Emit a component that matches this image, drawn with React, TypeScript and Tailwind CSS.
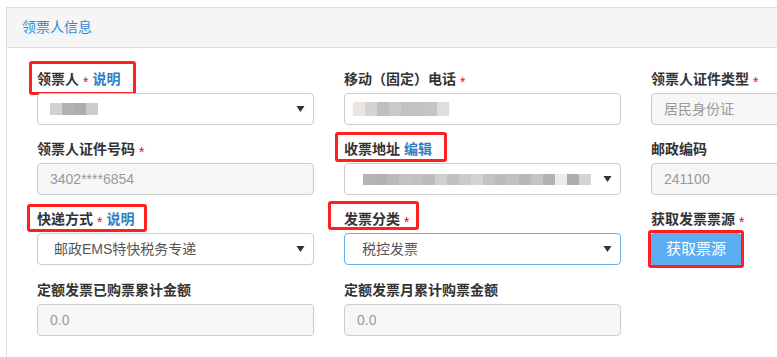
import React from "react";

const FONT = { fontFamily: '"Liberation Sans", "Noto Sans CJK SC", Arial, sans-serif' };

function Star() {
  return <span className="relative top-[3px] ml-[4px] text-[14px] font-normal text-[#ff0000]">*</span>;
}

function Mark({ cls }: { cls: string }) {
  return <span className={"pointer-events-none absolute rounded-[3px] border-[3px] border-[#ff1f1f] " + cls} />;
}

function Arrow() {
  return (
    <svg width="9" height="7" viewBox="0 0 9 7" className="absolute right-[8px] top-1/2 -translate-y-1/2">
      <path d="M0.5 0.5 H8.5 L4.5 6.5 Z" fill="#333" />
    </svg>
  );
}

function Blocks({ colors, h = 12 }: { colors: string[]; h?: number }) {
  return (
    <div className="flex blur-[0.6px]">
      {colors.map((c, i) => (
        <div key={i} className="w-[12px]" style={{ background: c, height: h }} />
      ))}
    </div>
  );
}

function Label({ children, mark }: { children: React.ReactNode; mark?: string }) {
  return (
    <div className="mb-[4px] h-5 leading-5">
      <span className="relative inline-block whitespace-nowrap text-[14px] font-bold text-[#333]">
        {children}
        {mark && <Mark cls={mark} />}
      </span>
    </div>
  );
}

function Box({
  children,
  disabled,
  select,
  focus,
  pl = "pl-[12px]",
}: {
  children?: React.ReactNode;
  disabled?: boolean;
  select?: boolean;
  focus?: boolean;
  pl?: string;
}) {
  return (
    <div
      className={
        "relative flex h-[32px] items-center rounded-[4px] border text-[14px] " +
        pl +
        " " +
        (focus ? "border-[#66afe9] " : "border-[#cccccc] ") +
        (disabled ? "bg-[#f6f6f6] text-[#999]" : "bg-white text-[#555]")
      }
    >
      {children}
      {select && <Arrow />}
    </div>
  );
}

export default function App() {
  return (
    <div className="h-[357px] w-[777px] overflow-hidden bg-white pl-[6px] pt-[7px]" style={FONT}>
      <div className="h-[400px] w-[820px] border border-[#dddddd] bg-white">
        <div className="flex h-[40px] items-center border-b border-[#dddddd] bg-[#f5f5f5] pl-[15px] text-[14px] text-[#2d8bd3]">
          领票人信息
        </div>
        <div className="grid grid-cols-[307px_307px_206px] pl-[15px] pt-[21px]">
          {/* Row 1 */}
          <div className="mb-[14px] px-[15px]">
            <Label mark="-left-[8px] -top-[8px] w-[107px] h-[34px]">
              领票人
              <Star />
              <span className="ml-[4px] text-[#2f7ec4]">说明</span>
            </Label>
            <Box select>
              <Blocks colors={["#d2d2d0", "#b2b2b2", "#adadad", "#c9cbce"]} />
            </Box>
          </div>
          <div className="mb-[14px] px-[15px]">
            <Label>
              移动（固定）电话
              <Star />
            </Label>
            <Box pl="pl-[6px]">
              <div className="rounded-[6px] bg-[#fafafa] px-[2px]">
                <Blocks colors={["#ece6e3", "#d3d4d6", "#bfbfbf", "#cacaca", "#c1c1c1", "#c2c2c2", "#c5c5c5", "#dedede"]} h={14} />
              </div>
            </Box>
          </div>
          <div className="mb-[14px] pl-[15px]">
            <Label>
              领票人证件类型
              <Star />
            </Label>
            <Box disabled>居民身份证</Box>
          </div>

          {/* Row 2 */}
          <div className="mb-[14px] px-[15px]">
            <Label>
              领票人证件号码
              <Star />
            </Label>
            <Box disabled>3402****6854</Box>
          </div>
          <div className="mb-[14px] px-[15px]">
            <Label mark="-left-[9px] -top-[7px] w-[112px] h-[30px]">
              收票地址
              <span className="ml-[4px] text-[#2f7ec4]">编辑</span>
            </Label>
            <Box select pl="pl-[18px]">
              <Blocks
                h={11}
                colors={[
                  "#b4b4b6",
                  "#b2b2b3",
                  "#bababa",
                  "#c3c3c3",
                  "#c1c1c1",
                  "#bcbcbe",
                  "#cfd0cd",
                  "#c1c1c1",
                  "#cbcbcb",
                  "#d3d3cf",
                  "#c2c2c2",
                  "#bcbcba",
                  "#bfc1c3",
                  "#b7b7b7",
                  "#c4c4c4",
                  "#b2b2b2",
                  "#ececec",
                  "#aeaeae",
                  "#d4d4d4",
                ]}
              />
            </Box>
          </div>
          <div className="mb-[14px] pl-[15px]">
            <Label>邮政编码</Label>
            <Box disabled>241100</Box>
          </div>

          {/* Row 3 */}
          <div className="mb-[14px] px-[15px]">
            <Label mark="-left-[10px] -top-[5px] w-[120px] h-[28px]">
              快递方式
              <Star />
              <span className="ml-[4px] text-[#2f7ec4]">说明</span>
            </Label>
            <Box select pl="pl-[16px]">
              邮政EMS特快税务专递
            </Box>
          </div>
          <div className="mb-[14px] px-[15px]">
            <Label mark="-left-[16px] -top-[8px] w-[91px] h-[29px]">
              发票分类
              <Star />
            </Label>
            <Box select focus pl="pl-[17px]">
              税控发票
            </Box>
          </div>
          <div className="mb-[14px] pl-[15px]">
            <Label>
              获取发票票源
              <Star />
            </Label>
            <div className="relative inline-block">
              <button className="h-[33px] w-[90px] rounded-[3px] bg-[#5caef2] text-[15px] text-white">
                获取票源
              </button>
              <Mark cls="-left-[3px] -top-[3px] w-[96px] h-[38px]" />
            </div>
          </div>

          {/* Row 4 */}
          <div className="px-[15px]">
            <Label>定额发票已购票累计金额</Label>
            <Box disabled>0.0</Box>
          </div>
          <div className="px-[15px]">
            <Label>定额发票月累计购票金额</Label>
            <Box disabled>0.0</Box>
          </div>
          <div />
        </div>
      </div>
    </div>
  );
}
